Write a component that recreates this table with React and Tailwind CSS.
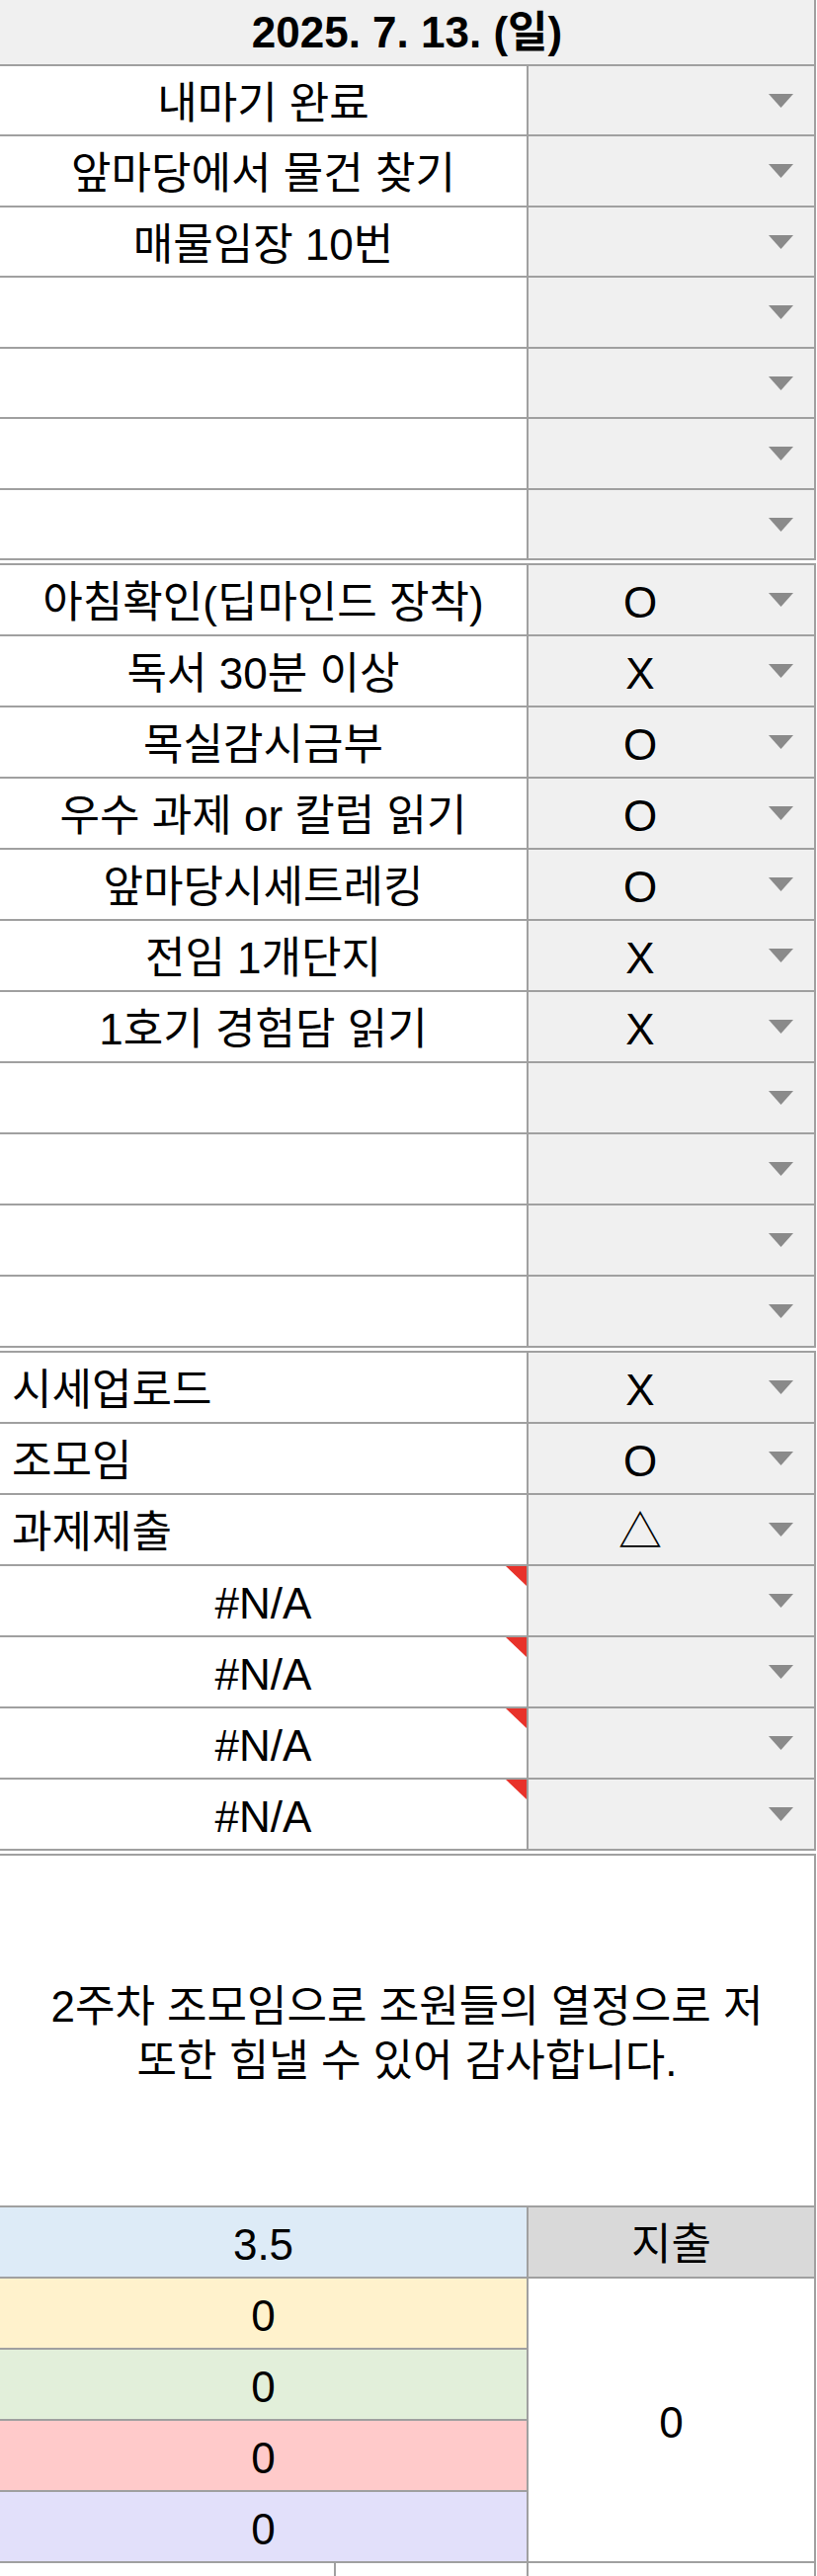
import React from 'react';

const GRID = 'border-[#a0a0a0]';

const sectionOne = [
  { h: 'h-[71px]', label: '내마기 완료' },
  { h: 'h-[72px]', label: '앞마당에서 물건 찾기' },
  { h: 'h-[71px]', label: '매물임장 10번' },
  { h: 'h-[72px]', label: '' },
  { h: 'h-[71px]', label: '' },
  { h: 'h-[72px]', label: '' },
  { h: 'h-[71px]', label: '' },
];

const sectionTwo = [
  { label: '아침확인(딥마인드 장착)', value: 'O' },
  { label: '독서 30분 이상', value: 'X' },
  { label: '목실감시금부', value: 'O' },
  { label: '우수 과제 or 칼럼 읽기', value: 'O' },
  { label: '앞마당시세트레킹', value: 'O' },
  { label: '전임 1개단지', value: 'X' },
  { label: '1호기 경험담 읽기', value: 'X' },
  { label: '' },
  { label: '' },
  { label: '' },
  { label: '' },
];

const sectionThree = [
  { label: '시세업로드', value: 'X', left: true },
  { label: '조모임', value: 'O', left: true },
  { label: '과제제출', value: '△', left: true },
  { label: '#N/A', flag: true },
  { label: '#N/A', flag: true },
  { label: '#N/A', flag: true },
  { label: '#N/A', flag: true },
];

const scores = [
  { bg: 'bg-[#fff2cc]', value: '0' },
  { bg: 'bg-[#e2efda]', value: '0' },
  { bg: 'bg-[#ffcaca]', value: '0' },
  { bg: 'bg-[#e2e0fa]', value: '0' },
];

const Arrow = () => (
  <svg width="25" height="14" viewBox="0 0 25 14" className="ml-[17px] mr-[21px] shrink-0">
    <path d="M0 0H25L12.5 14Z" fill="#8a8a8a" />
  </svg>
);

// cell text sits a few px below the geometric centre in the sheet
const Txt = ({ children }) => <span className="relative top-[3px]">{children}</span>;

const Row = ({ h = 'h-[72px]', label, value, left, flag }) => (
  <div className={`flex border-b-2 ${GRID} ${h}`}>
    <div
      className={`relative w-[535px] shrink-0 flex items-center border-r-2 ${GRID} ${
        left ? 'justify-start pl-[12px]' : 'justify-center'
      }`}
    >
      {flag && (
        <span className="absolute right-0 top-0 w-[21px] h-[20px] bg-[#e8322a] [clip-path:polygon(0_0,100%_0,100%_100%)]" />
      )}
      <Txt>{label}</Txt>
    </div>
    <div className={`flex-1 flex items-center bg-[#f0f0f0] border-r-2 ${GRID}`}>
      <span className="flex-1 text-center relative top-[3px]">{value}</span>
      <Arrow />
    </div>
  </div>
);

const Section = ({ rows, first }) => (
  <>
    {!first && <div className="h-[3px] bg-white" />}
    <div className={first ? '' : `border-t-2 ${GRID}`}>
      {rows.map((row, i) => (
        <Row key={i} {...row} />
      ))}
    </div>
  </>
);

export default function App() {
  return (
    <div className="w-[827px] min-h-[2607px] overflow-hidden bg-white text-black text-[44px] leading-none [font-family:'Liberation_Sans','Noto_Sans_CJK_KR',sans-serif]">
      <div className="w-[826px]">
        <div className={`h-[67px] flex items-center justify-center bg-[#f0f0f0] border-b-2 border-r-2 ${GRID} font-bold`}>
          2025. 7. 13. (일)
        </div>

        <Section rows={sectionOne} first />
        <Section rows={sectionTwo} />
        <Section rows={sectionThree} />

        <div className="h-[3px] bg-white" />
        <div className={`h-[358px] flex items-center justify-center text-center leading-[55px] border-t-2 border-b-2 border-r-2 ${GRID}`}>
          <p className="relative top-[3px]">
            2주차 조모임으로 조원들의 열정으로 저
            <br />
            또한 힘낼 수 있어 감사합니다.
          </p>
        </div>

        <div className="grid grid-cols-[535px_291px]">
          <div className={`h-[72px] flex items-center justify-center bg-[#ddebf7] border-r-2 border-b-2 ${GRID}`}>
            <Txt>3.5</Txt>
          </div>
          <div className={`h-[72px] flex items-center justify-center bg-[#d9d9d9] border-r-2 border-b-2 ${GRID}`}>
            <Txt>지출</Txt>
          </div>
          {scores.map((s, i) => (
            <React.Fragment key={i}>
              <div className={`h-[72px] flex items-center justify-center border-r-2 border-b-2 ${GRID} ${s.bg}`}>
                <Txt>{s.value}</Txt>
              </div>
              {i === 0 && (
                <div className={`row-span-4 flex items-center justify-center bg-white border-r-2 border-b-2 ${GRID}`}>
                  <Txt>0</Txt>
                </div>
              )}
            </React.Fragment>
          ))}
          <div className="h-[72px] flex">
            <div className={`w-[340px] border-r-2 ${GRID}`} />
            <div className={`flex-1 border-r-2 ${GRID}`} />
          </div>
          <div className={`h-[72px] border-r-2 ${GRID}`} />
        </div>
      </div>
    </div>
  );
}
